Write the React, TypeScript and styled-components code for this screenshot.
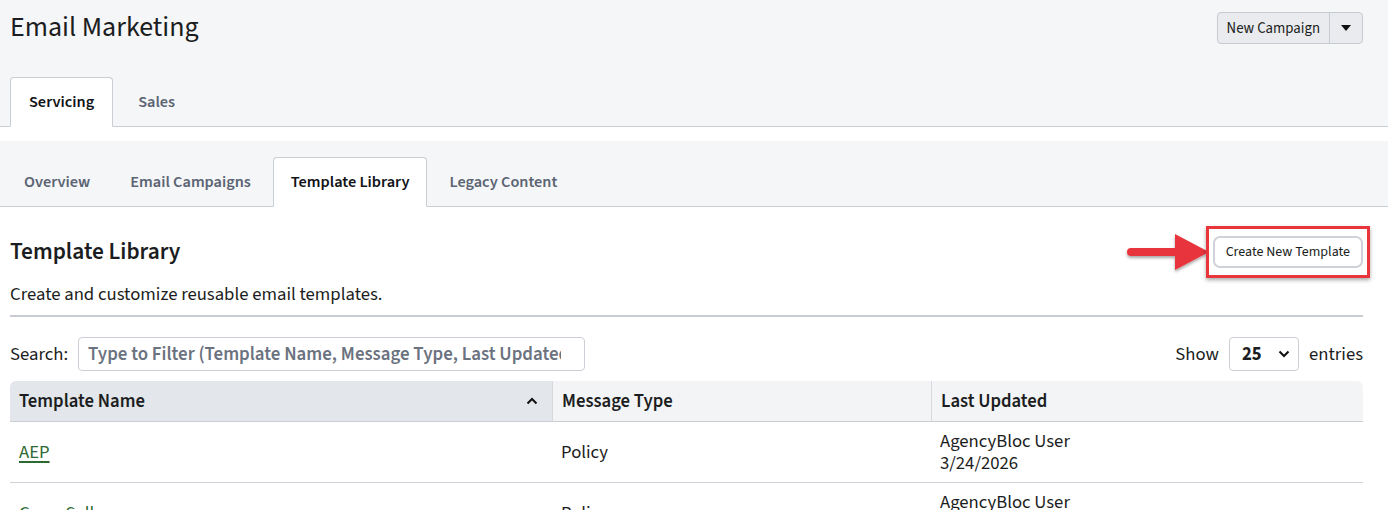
import React from "react";
import styled, { createGlobalStyle } from "styled-components";

const FONT = `"Source Sans 3", "Source Sans Pro", Lato, "Noto Sans", sans-serif`;

const Global = createGlobalStyle`
  * { box-sizing: border-box; }
  body {
    margin: 0;
    background: #ffffff;
    font-family: ${FONT};
    color: #1b1d21;
  }
`;

const Page = styled.div`
  width: 1388px;
  height: 510px;
  overflow: hidden;
`;

const Header = styled.header`
  background: #f5f6f8;
  border-bottom: 1px solid #c9cdd4;
`;

const TopRow = styled.div`
  display: flex;
  justify-content: space-between;
  align-items: flex-start;
  padding: 12px 25px 0 10px;
  height: 77px;
`;

const Title = styled.h1`
  margin: 0;
  font-size: 28px;
  font-weight: 400;
  line-height: 30px;
`;

const SplitButton = styled.div`
  display: flex;
  height: 32px;
  border: 1px solid #c6cad1;
  border-radius: 4px;
  background: #e9ebee;
  overflow: hidden;
`;

const SplitMain = styled.button`
  border: 0;
  background: transparent;
  font-family: ${FONT};
  font-size: 14.8px;
  color: #1b1d21;
  padding: 0 9px;
  border-right: 1px solid #c6cad1;
`;

const SplitCaret = styled.button`
  border: 0;
  background: transparent;
  width: 32px;
  display: flex;
  align-items: center;
  justify-content: center;
`;

const TabBar = styled.nav<{ $pad: number; $gap: number }>`
  display: flex;
  align-items: flex-end;
  gap: ${(p) => p.$gap}px;
  padding-left: ${(p) => p.$pad}px;
  height: 50px;
  margin-bottom: -1px;
`;

const Tab = styled.div<{ $active?: boolean; $px: number }>`
  height: 50px;
  display: flex;
  align-items: center;
  padding: 0 ${(p) => p.$px}px;
  font-size: 16.3px;
  font-weight: 600;
  color: ${(p) => (p.$active ? "#111317" : "#5b6473")};
  background: ${(p) => (p.$active ? "#ffffff" : "transparent")};
  border: 1px solid ${(p) => (p.$active ? "#c9cdd4" : "transparent")};
  border-bottom-color: ${(p) => (p.$active ? "#ffffff" : "transparent")};
  border-radius: 4px 4px 0 0;
`;

const Gap = styled.div`
  height: 14px;
  background: #ffffff;
`;

const SubHeader = styled.div`
  background: #f5f6f8;
  border-bottom: 1px solid #c9cdd4;
  padding-top: 16px;
`;

const Content = styled.main`
  padding: 29px 25px 0 10px;
`;

const HeadRow = styled.div`
  display: flex;
  justify-content: space-between;
  align-items: center;
  height: 32px;
`;

const H2 = styled.h2`
  margin: 0;
  font-size: 23.4px;
  font-weight: 600;
  line-height: 26px;
`;

const Sub = styled.p`
  margin: 15px 0 10px;
  font-size: 18.7px;
  line-height: 22px;
`;

const CreateWrap = styled.div`
  position: relative;
`;

const CreateButton = styled.button`
  height: 32px;
  padding: 0 11px;
  background: #ffffff;
  border: 2px solid #cfd3d9;
  border-radius: 7px;
  font-family: ${FONT};
  font-size: 14px;
  color: #1b1d21;
`;

const Highlight = styled.div`
  position: absolute;
  inset: -10px -7px -10px -7px;
  border: 3px solid #e8363c;
  box-shadow: 0 2px 4px rgba(0, 0, 0, 0.35);
  pointer-events: none;
`;

const Arrow = styled.svg`
  position: absolute;
  left: -86px;
  top: -2px;
  overflow: visible;
`;

const Divider = styled.hr`
  margin: 0;
  border: 0;
  height: 2px;
  background: #c9cdd3;
`;

const Controls = styled.div`
  display: flex;
  justify-content: space-between;
  align-items: center;
  margin-top: 20px;
  height: 34px;
`;

const Label = styled.label`
  display: flex;
  align-items: center;
  gap: 10px;
  font-size: 18.7px;
`;

const SearchInput = styled.input`
  width: 507px;
  height: 34px;
  border: 1px solid #ccd0d6;
  border-radius: 4px;
  padding: 0 23px 0 9px;
  font-family: ${FONT};
  font-size: 18.9px;
  color: #1b1d21;
  &::placeholder {
    color: #6b7280;
    font-weight: 600;
  }
`;

const SelectBox = styled.div`
  width: 70px;
  height: 34px;
  border: 1px solid #ccd0d6;
  border-radius: 4px;
  display: flex;
  align-items: center;
  justify-content: space-between;
  padding: 0 8px 0 12px;
  font-size: 18.7px;
  font-weight: 700;
`;

const Table = styled.table`
  margin-top: 10px;
  width: 100%;
  border-collapse: separate;
  border-spacing: 0;
  font-size: 18.7px;
`;

const Th = styled.th<{ $sorted?: boolean; $w: number }>`
  width: ${(p) => p.$w}px;
  height: 41px;
  text-align: left;
  padding: 0 9px;
  font-weight: 600;
  background: ${(p) => (p.$sorted ? "#e3e6ea" : "#f3f4f6")};
  border-bottom: 1px solid #c9cdd4;
  border-left: 1px solid #d6d9de;
  &:first-child {
    border-left: 0;
    border-top-left-radius: 6px;
  }
  &:last-child {
    border-top-right-radius: 6px;
  }
`;

const ThInner = styled.div`
  display: flex;
  justify-content: space-between;
  align-items: center;
  padding-right: 5px;
`;

const Td = styled.td`
  padding: 8px 9px;
  line-height: 22px;
  vertical-align: middle;
  border-bottom: 1px solid #d0d4da;
`;

const LinkText = styled.a`
  color: #2d6a33;
  text-decoration: underline;
  text-decoration-thickness: 2px;
  text-underline-offset: 3px;
`;

const rows = [
  { name: "AEP", type: "Policy", user: "AgencyBloc User", date: "3/24/2026" },
  { name: "Cross Sell", type: "Policy", user: "AgencyBloc User", date: "3/24/2026" },
];

export default function App() {
  return (
    <Page>
      <Global />
      <Header>
        <TopRow>
          <Title>Email Marketing</Title>
          <SplitButton>
            <SplitMain>New Campaign</SplitMain>
            <SplitCaret>
              <svg width="10" height="6" viewBox="0 0 10 6">
                <path d="M0 0h10L5 6z" fill="#111" />
              </svg>
            </SplitCaret>
          </SplitButton>
        </TopRow>
        <TabBar $pad={10} $gap={6}>
          <Tab $active $px={18}>Servicing</Tab>
          <Tab $px={18}>Sales</Tab>
        </TabBar>
      </Header>
      <Gap />
      <SubHeader>
        <TabBar $pad={6} $gap={4}>
          <Tab $px={17}>Overview</Tab>
          <Tab $px={17}>Email Campaigns</Tab>
          <Tab $active $px={17}>Template Library</Tab>
          <Tab $px={17}>Legacy Content</Tab>
        </TabBar>
      </SubHeader>
      <Content>
        <HeadRow>
          <H2>Template Library</H2>
          <CreateWrap>
            <Arrow width="84" height="36" viewBox="0 0 84 36">
              <defs>
                <filter id="sh" x="-20%" y="-30%" width="140%" height="160%">
                  <feDropShadow dx="0" dy="2" stdDeviation="1.5" floodColor="#000" floodOpacity="0.35" />
                </filter>
              </defs>
              <g filter="url(#sh)" fill="#e8363c">
                <rect x="0" y="14" width="54" height="8" rx="4" />
                <path d="M48 0 L82 18 L48 36 Z" />
              </g>
            </Arrow>
            <CreateButton>Create New Template</CreateButton>
            <Highlight />
          </CreateWrap>
        </HeadRow>
        <Sub>Create and customize reusable email templates.</Sub>
        <Divider />
        <Controls>
          <Label>
            Search:
            <SearchInput placeholder="Type to Filter (Template Name, Message Type, Last Updated)" />
          </Label>
          <Label>
            Show
            <SelectBox>
              25
              <svg width="12" height="8" viewBox="0 0 12 8">
                <path d="M1.5 1.5L6 6l4.5-4.5" stroke="#111" strokeWidth="2" fill="none" />
              </svg>
            </SelectBox>
            entries
          </Label>
        </Controls>
        <Table>
          <thead>
            <tr>
              <Th $sorted $w={542}>
                <ThInner>
                  Template Name
                  <svg width="12" height="8" viewBox="0 0 12 8">
                    <path d="M1.5 6.5L6 2l4.5 4.5" stroke="#111" strokeWidth="2" fill="none" />
                  </svg>
                </ThInner>
              </Th>
              <Th $w={379}>Message Type</Th>
              <Th $w={432}>Last Updated</Th>
            </tr>
          </thead>
          <tbody>
            {rows.map((r) => (
              <tr key={r.name}>
                <Td>
                  <LinkText href="#">{r.name}</LinkText>
                </Td>
                <Td>{r.type}</Td>
                <Td>
                  {r.user}
                  <br />
                  {r.date}
                </Td>
              </tr>
            ))}
          </tbody>
        </Table>
      </Content>
    </Page>
  );
}
